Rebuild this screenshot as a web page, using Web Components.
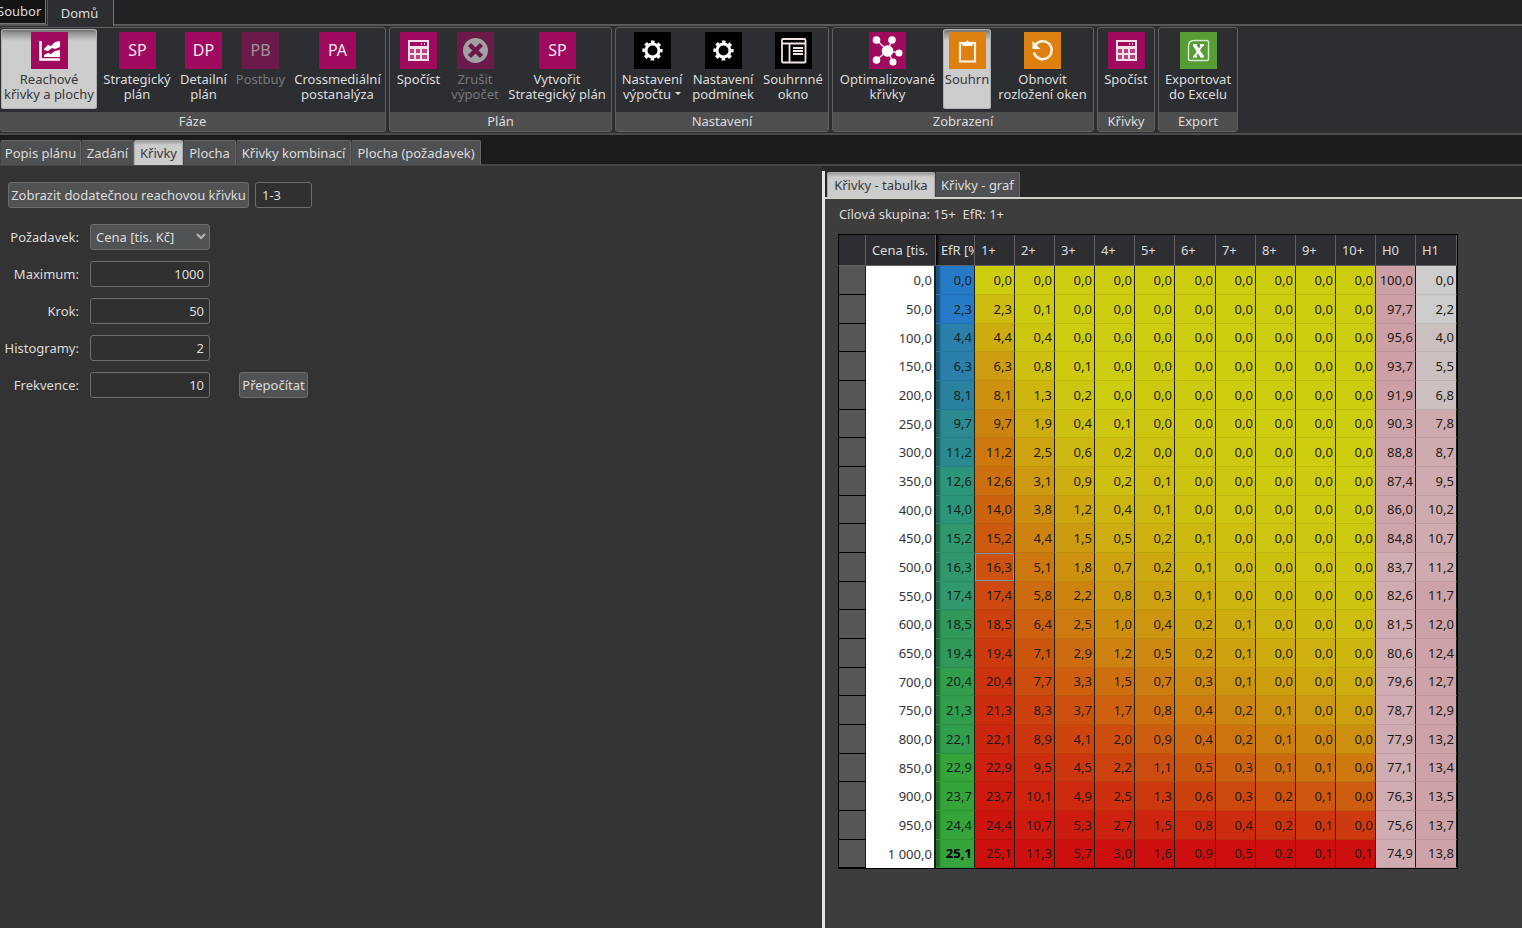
<!DOCTYPE html>
<html lang="cs">
<head>
<meta charset="utf-8">
<title>Reachové křivky a plochy</title>
<style>
html, body { height: 100%; }
body { margin: 0; background: #333; color: #dcdcdc; font: 13px/15px "Noto Sans", "Open Sans", sans-serif; }
</style>
</head>
<body>
<plan-app></plan-app>
<script>
const define = (name, html, setup) => {
  const tpl = document.createElement('template');
  tpl.innerHTML = '<style>*,:host{box-sizing:border-box}button,input,select{font:inherit;color:inherit;margin:0}</style>' + html;
  customElements.define(name, class extends HTMLElement {
    constructor() {
      super();
      this.attachShadow({ mode: 'open' }).append(tpl.content.cloneNode(true));
    }
    connectedCallback() { if (setup) setup(this, this.shadowRoot); }
  });
};

const calc = '<path fill="#f3dfe8" d="M8 8h21v21H8z"/><path fill="#a00a5e" d="M10 10h17v4H10z"/><path fill="#f3dfe8" d="M21 11h1v2h-1zM24 11h1v2h-1z"/><path fill="#b8447f" d="M10 17h4v4h-4zM16 17h4v4h-4zM22 17h5v4h-5zM10 23h4v4h-4zM16 23h4v4h-4zM22 23h5v4h-5z"/>';
const gear = '<g fill="none" stroke="#fff"><circle cx="18.500" cy="18.500" r="6.500" stroke-width="3"/><circle cx="18.500" cy="18.500" r="8.800" stroke-width="2.600" stroke-dasharray="3.600 3.311" stroke-dashoffset="1.800"/></g>';
const letters = t => `<text x="18.500" y="24" text-anchor="middle" font-size="16" fill="#f4e4ec">${t}</text>`;
const ICONS = {
  chart: ['#a00a5e', '<path fill="none" stroke="#fff" stroke-width="2.500" d="M9.500 9v18.500H29"/><path fill="#fff" d="M13 17l4-4 3 1 4-4 5-1v6l-5 2-3-1-4 3-4-1zM13 23l4-2 3 1 4-3 5-1v7H13z"/>'],
  sp: ['#a00a5e', letters('SP')], dp: ['#a00a5e', letters('DP')],
  pb: ['#a00a5e', letters('PB')], pa: ['#a00a5e', letters('PA')],
  calc: ['#a00a5e', calc],
  cancel: ['#a00a5e', '<circle cx="18.500" cy="18.500" r="12.500" fill="#fff"/><path stroke="#a00a5e" stroke-width="4.500" d="M12.500 12.500l12 12m0-12l-12 12"/>'],
  gear: ['#000', gear],
  win: ['#000', '<g fill="none" stroke="#efe3e3" stroke-width="1.800"><rect x="7" y="7" width="23.500" height="23.500" rx="1"/><path d="M7 11.500h23.500M14.500 12v18M18 16h10M18 19h10M18 22h10"/></g>'],
  net: ['#a00a5e', '<path stroke="#f0cfe0" stroke-width="1.600" d="M18.500 18.500L7.500 8m11 10.500L23 8m-4.500 10.500L30 21m-11.500-2.500L7.500 28m11-9.500L24 30"/><g fill="#fff"><circle cx="18.500" cy="19" r="5.800"/><circle cx="7.500" cy="8" r="3.800"/><circle cx="23" cy="8" r="3.800"/><circle cx="30" cy="21" r="3.500"/><circle cx="7.500" cy="28" r="3.800"/><circle cx="24" cy="30" r="3.500"/></g>'],
  clip: ['#dd800f', '<rect x="11" y="11" width="15" height="18.500" fill="none" stroke="#fbeedd" stroke-width="2.200"/><path fill="#fff" d="M13.500 14v-3.500h3L18.500 8l2 2.500h3V14z"/>'],
  reset: ['#dd800f', '<path fill="none" stroke="#fdf2e4" stroke-width="2.500" d="M11 13.500a9 9 0 1 1-1 7"/><path fill="#fff" d="M8.500 9v8h8z"/>'],
  excel: ['#579d35', '<path fill="none" stroke="#d8ead0" stroke-width="1.400" d="M14 8.500h13q1.500 0 1.500 1.500v17q0 1.500-1.500 1.500H10q-1.500 0-1.500-1.500V14q0-5.500 5.500-5.500z"/><path fill="none" stroke="#fff" stroke-width="3.400" d="M14.500 13l7.500 11.500"/><path fill="none" stroke="#fff" stroke-width="2" d="M22.500 13L14.500 24.500M13 13h4m3 0h4M13 24.500h4m3 0h4"/>']
};

define('ribbon-button', `<style>
:host { display: flex; padding: 0 1px; }
button { width: 100%; height: 80px; border: 0; padding: 3px 0 0; background: none; border-radius: 3px; display: flex; flex-direction: column; align-items: center; gap: 3px; white-space: pre; }
svg { width: 37px; height: 37px; display: block; flex: none; }
:host([active]) button { background: linear-gradient(#666, #929292 4px, #b5b5b5 9px, #ccc 12px); color: #38383c; box-shadow: inset 0 0 0 1px #b0b0b0; }
button:disabled { color: #77777a; }
button:disabled svg { opacity: .55; }
span { text-align: center; }
.more::after { content: ""; display: inline-block; border: 3px solid transparent; border-top-color: currentColor; border-bottom: 0; margin-left: 4px; vertical-align: 4px; }
</style><button type="button"><svg viewBox="0 0 37 37" aria-hidden="true"></svg><span><slot></slot></span></button>`,
(el, root) => {
  const [bg, art] = ICONS[el.getAttribute('icon')];
  root.querySelector('svg').innerHTML = `<rect width="37" height="37" fill="${bg}"/>${art}`;
  el.style.width = el.getAttribute('size') + 'px';
  root.querySelector('button').disabled = el.hasAttribute('off');
  root.querySelector('span').classList.toggle('more', el.hasAttribute('menu'));
});

define('ribbon-group', `<style>
:host { display: block; flex: none; border: 1px solid #606062; border-radius: 3px; height: 105px; }
.items { display: flex; padding: 1px 0 2px; height: 84px; }
h2 { margin: 0; font: inherit; text-align: center; background: #4f4f50; height: 19px; line-height: 19px; }
</style><div class="items"><slot></slot></div><h2></h2>`,
(el, root) => { root.querySelector('h2').textContent = el.getAttribute('label'); });

define('app-ribbon', `<style>
:host { display: block; background: #2d2e32; }
nav { display: flex; height: 26px; background: #212224; border-bottom: 2px solid #58585a; line-height: 24px; }
nav button { border: 0; padding: 0; background: none; line-height: 23px; height: 24px; border-right: 1px solid #77777a; }
.file { width: 46px; text-indent: -3px; background: #141414; border-bottom: 1px solid #77777a; text-align: left; }
nav .home { width: 67px; height: 26px; background: #2d2e32; border-left: 1px solid #58585a; margin-left: 1px; padding-right: 2px; line-height: 22px; }
.groups { display: flex; gap: 3px; padding: 1px 0; border-bottom: 2px solid #4c4c4e; height: 109px; }
.groups ribbon-group:first-child { border-left: 0; }
</style>
<nav><button class="file" type="button">Soubor</button><button class="home" type="button">Domů</button></nav>
<div class="groups">
<ribbon-group label="Fáze"><ribbon-button icon="chart" size="98" active>Reachové
křivky a plochy</ribbon-button><ribbon-button icon="sp" size="78">Strategický
plán</ribbon-button><ribbon-button icon="dp" size="55">Detailní
plán</ribbon-button><ribbon-button icon="pb" size="59" off>Postbuy</ribbon-button><ribbon-button icon="pa" size="95">Crossmediální
postanalýza</ribbon-button></ribbon-group>
<ribbon-group label="Plán"><ribbon-button icon="calc" size="57">Spočíst</ribbon-button><ribbon-button icon="cancel" size="56" off>Zrušit
výpočet</ribbon-button><ribbon-button icon="sp" size="108">Vytvořit
Strategický plán</ribbon-button></ribbon-group>
<ribbon-group label="Nastavení"><ribbon-button icon="gear" size="72" menu>Nastavení
výpočtu</ribbon-button><ribbon-button icon="gear" size="70">Nastavení
podmínek</ribbon-button><ribbon-button icon="win" size="70">Souhrnné
okno</ribbon-button></ribbon-group>
<ribbon-group label="Zobrazení"><ribbon-button icon="net" size="109">Optimalizované
křivky</ribbon-button><ribbon-button icon="clip" size="50" active>Souhrn</ribbon-button><ribbon-button icon="reset" size="101">Obnovit
rozložení oken</ribbon-button></ribbon-group>
<ribbon-group label="Křivky"><ribbon-button icon="calc" size="56">Spočíst</ribbon-button></ribbon-group>
<ribbon-group label="Export"><ribbon-button icon="excel" size="78">Exportovat
do Excelu</ribbon-button></ribbon-group>
</div>`);

define('tab-button', `<style>
:host { display: block; flex: none; }
button { width: 100%; height: 25px; border: 1px solid #656567; border-bottom: 0; border-left-color: #454547; border-radius: 2px 2px 0 0; padding: 0; background: #4f5052; white-space: nowrap; line-height: 24px; display: flex; justify-content: center; }
:host([active]) button { background: linear-gradient(#999, #ccc 4px); border-color: #aaa; color: #38383c; }
</style><button type="button" role="tab"><slot></slot></button>`,
(el, root) => {
  el.style.width = el.getAttribute('size') + 'px';
  root.querySelector('button').setAttribute('aria-selected', el.hasAttribute('active'));
});

define('curve-form', `<style>
:host { display: block; padding: 16px 8px; }
.top { display: flex; gap: 6px; }
button { height: 26px; padding: 0; background: #515254; border: 1px solid #6d6d6f; border-radius: 3px; white-space: nowrap; display: flex; align-items: center; justify-content: center; }
.add { width: 241px; }
input { height: 26px; background: #303030; border: 1px solid #6d6d6f; border-radius: 3px; width: 120px; text-align: right; padding: 0 5px; outline: 0; }
.top input { width: 57px; text-align: left; padding: 0 6px; }
.rows { display: grid; grid-template-columns: 71px 120px 87px; column-gap: 11px; row-gap: 11px; margin-top: 16px; align-items: center; }
label { grid-column: 1; white-space: nowrap; display: flex; justify-content: flex-end; }
.pick { position: relative; display: block; }
.pick select { appearance: none; width: 120px; height: 26px; padding: 0 5px; background: #515254; border: 1px solid #6d6d6f; border-radius: 3px; display: block; }
.pick svg { position: absolute; right: 4px; top: 9px; width: 10px; height: 7px; pointer-events: none; }
.calc { margin-left: 18px; width: 69px; }
</style>
<div class="top"><button class="add" type="button">Zobrazit dodatečnou reachovou křivku</button><input aria-label="Křivka" value="1-3"></div>
<div class="rows">
<label for="a">Požadavek:</label><span class="pick"><select id="a"><option>Cena [tis. Kč]</option></select><svg viewBox="0 0 10 7"><path d="M1 1l4 4 4-4" fill="none" stroke="#b8b8b8" stroke-width="2"/></svg></span>
<label for="b">Maximum:</label><input id="b" value="1000">
<label for="c">Krok:</label><input id="c" value="50">
<label for="d">Histogramy:</label><input id="d" value="2">
<label for="e">Frekvence:</label><input id="e" value="10"><button class="calc" type="button">Přepočítat</button>
</div>`);

const ROWS = `0,0 0,0 0,0 0,0 0,0 0,0 0,0 0,0 0,0 0,0 0,0 100,0 0,0
2,3 2,3 0,1 0,0 0,0 0,0 0,0 0,0 0,0 0,0 0,0 97,7 2,2
4,4 4,4 0,4 0,0 0,0 0,0 0,0 0,0 0,0 0,0 0,0 95,6 4,0
6,3 6,3 0,8 0,1 0,0 0,0 0,0 0,0 0,0 0,0 0,0 93,7 5,5
8,1 8,1 1,3 0,2 0,0 0,0 0,0 0,0 0,0 0,0 0,0 91,9 6,8
9,7 9,7 1,9 0,4 0,1 0,0 0,0 0,0 0,0 0,0 0,0 90,3 7,8
11,2 11,2 2,5 0,6 0,2 0,0 0,0 0,0 0,0 0,0 0,0 88,8 8,7
12,6 12,6 3,1 0,9 0,2 0,1 0,0 0,0 0,0 0,0 0,0 87,4 9,5
14,0 14,0 3,8 1,2 0,4 0,1 0,0 0,0 0,0 0,0 0,0 86,0 10,2
15,2 15,2 4,4 1,5 0,5 0,2 0,1 0,0 0,0 0,0 0,0 84,8 10,7
16,3 16,3 5,1 1,8 0,7 0,2 0,1 0,0 0,0 0,0 0,0 83,7 11,2
17,4 17,4 5,8 2,2 0,8 0,3 0,1 0,0 0,0 0,0 0,0 82,6 11,7
18,5 18,5 6,4 2,5 1,0 0,4 0,2 0,1 0,0 0,0 0,0 81,5 12,0
19,4 19,4 7,1 2,9 1,2 0,5 0,2 0,1 0,0 0,0 0,0 80,6 12,4
20,4 20,4 7,7 3,3 1,5 0,7 0,3 0,1 0,0 0,0 0,0 79,6 12,7
21,3 21,3 8,3 3,7 1,7 0,8 0,4 0,2 0,1 0,0 0,0 78,7 12,9
22,1 22,1 8,9 4,1 2,0 0,9 0,4 0,2 0,1 0,0 0,0 77,9 13,2
22,9 22,9 9,5 4,5 2,2 1,1 0,5 0,3 0,1 0,1 0,0 77,1 13,4
23,7 23,7 10,1 4,9 2,5 1,3 0,6 0,3 0,2 0,1 0,0 76,3 13,5
24,4 24,4 10,7 5,3 2,7 1,5 0,8 0,4 0,2 0,1 0,0 75,6 13,7
25,1 25,1 11,3 5,7 3,0 1,6 0,9 0,5 0,2 0,1 0,1 74,9 13,8`.split('\n').map(r => r.split(' '));
const HEAD = ['EfR [%]', '1+', '2+', '3+', '4+', '5+', '6+', '7+', '8+', '9+', '10+', 'H0', 'H1'];
const MAX = [0, 25.1, 11.3, 5.7, 3.0];
const POWER = [0, 0, 0, 0, 0, 2.4, 2.9, 3.4, 4, 4.5, 5];
const EFR = ['#267bc8', '#267bc8', '#2a80ab', '#2a80ab', '#2a82a0', '#2a8a90', '#2a8a90', '#2d957a', '#2d957a', '#30986c', '#30986c', '#30986c', '#309858', '#309858', '#309e4c', '#309e4c', '#309e4c', '#35a43a', '#35a43a', '#35a43a', '#35a43a'];

const shade = (col, row, text) => {
  if (col === 0) return EFR[row];
  if (col === 11) return row < 5 ? '#cda0a8' : row < 10 ? '#cea4ac' : '#cfabb2';
  if (col === 12) return row < 2 ? '#cccccc' : row < 5 ? '#ccbfc0' : row < 11 ? '#cfabb0' : '#cea2a9';
  const part = col < 5 ? parseFloat(text.replace(',', '.')) / MAX[col] : Math.pow(row / 20, POWER[col]);
  return `rgb(205,${Math.round(205 - 190 * Math.min(part, 1))},15)`;
};

define('curve-table', `<style>
:host { display: block; }
table { table-layout: fixed; width: 620px; border-collapse: separate; border-spacing: 0; border: 1px solid #000; border-left-width: 0; }
th, td { padding: 0 2px 0 0; overflow: hidden; white-space: nowrap; text-align: right; font-weight: 400; border-right: 1px solid #1c1c10; }
thead th { height: 31px; background: #2d2e32; text-align: left; padding: 0 0 0 6px; border-right-color: #606062; border-bottom: 1px solid #606062; }
thead th:first-child { border-left: 1px solid #000; }
thead th:nth-child(3) { padding-left: 5px; box-shadow: inset 4px 0 3px -2px #000; }
tbody tr { height: 29px; }
tbody tr:nth-child(3n) { height: 28px; }
tbody td { color: #1c1c14; border-bottom: 1px solid #00000014; }
tbody td.grip { background: #555658; border-bottom-color: #000; border-left: 1px solid #000; }
tbody th { background: #fff; color: #333; border-right: 2px solid #10251c; }
td.efr { color: #10241c; box-shadow: inset 5px 0 2px -1px #0005; }
td.picked { box-shadow: inset 0 0 0 1px #7b98a8; }
tbody tr:last-child .efr { font-weight: 700; color: #000; }
</style>
<table><colgroup></colgroup><thead><tr></tr></thead><tbody></tbody></table>`,
(el, root) => {
  const widths = [28, 70, 39, 40, 40, 40, 40, 40, 41, 40, 40, 40, 40, 40, 41];
  root.querySelector('colgroup').innerHTML = widths.map(w => `<col style="width:${w}px">`).join('');
  root.querySelector('thead tr').innerHTML = '<th></th><th scope="col">Cena [tis.</th>' + HEAD.map(h => `<th scope="col">${h}</th>`).join('');
  root.querySelector('tbody').innerHTML = ROWS.map((cells, r) => {
    const price = r === 20 ? '1 000,0' : r * 50 + ',0';
    return `<tr><td class="grip"></td><th scope="row">${price}</th>` + cells.map((t, c) =>
      `<td class="${c === 0 ? 'efr' : r === 10 && c === 1 ? 'picked' : ''}" style="background-color:${shade(c, r, t)}">${t}</td>`).join('') + '</tr>';
  }).join('');
});

define('result-pane', `<style>
:host { display: flex; flex-direction: column; background: #3d3d3d; border-left: 3px solid #e4e4e4; }
.tabs { display: flex; background: #272727; padding: 1px 0 0 2px; border-bottom: 2px solid #d0d2cc; height: 28px; }
p { margin: 0; padding: 8px 14px 12px; white-space: pre; }
curve-table { padding-left: 13px; }
</style>
<div class="tabs" role="tablist"><tab-button size="108" active>Křivky - tabulka</tab-button><tab-button size="85">Křivky - graf</tab-button></div>
<p>Cílová skupina: 15+  EfR: 1+</p>
<curve-table></curve-table>`);

define('plan-app', `<style>
:host { display: flex; flex-direction: column; min-height: 100vh; }
.tabs { display: flex; background: #1c1c1c; padding-top: 5px; height: 31px; border-bottom: 2px solid #454545; }
main { display: flex; flex: 1; }
curve-form { width: 54%; flex: none; }
.right { flex: 1; display: flex; padding-top: 5px; background: linear-gradient(#272727 5px, #333 5px); }
result-pane { flex: 1; }
</style>
<app-ribbon></app-ribbon>
<div class="tabs" role="tablist"><tab-button size="81">Popis plánu</tab-button><tab-button size="53">Zadání</tab-button><tab-button size="49" active>Křivky</tab-button><tab-button size="53">Plocha</tab-button><tab-button size="115">Křivky kombinací</tab-button><tab-button size="130">Plocha (požadavek)</tab-button></div>
<main><curve-form></curve-form><div class="right"><result-pane></result-pane></div></main>`);
</script>
</body>
</html>
